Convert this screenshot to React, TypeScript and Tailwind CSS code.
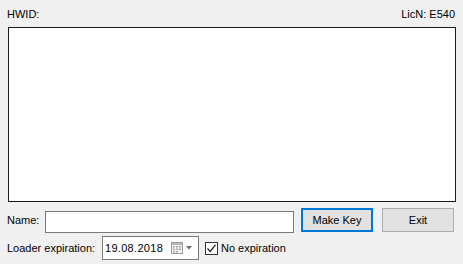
import React from "react";

export default function App() {
  return (
    <div
      className="w-[463px] h-[264px] bg-[#f0f0f0] text-[11px] text-black overflow-hidden"
      style={{ fontFamily: '"Liberation Sans", Arial, sans-serif' }}
    >
      <div className="flex justify-between pl-[7px] pr-[8px] pt-[8px] h-[27px] leading-[13px]">
        <span>HWID:</span>
        <span>LicN: E540</span>
      </div>
      <div className="ml-[8px] w-[448px] h-[175px] border border-[#1a1a1a] bg-white" />
      <div className="flex items-center h-[24px] mt-[6px] pl-[7px]">
        <span className="w-[38px]">Name:</span>
        <div className="w-[249px] h-[22px] border border-[#7a7a7a] bg-white mt-[3px]" />
        <button className="ml-[7px] w-[72px] h-[24px] border-2 border-[#0078d7] bg-[#e1e1e1] leading-none">
          Make Key
        </button>
        <button className="ml-[9px] w-[72px] h-[24px] border border-[#adadad] bg-[#e1e1e1] leading-none">
          Exit
        </button>
      </div>
      <div className="flex items-center h-[24px] mt-[4px] pl-[7px]">
        <span className="w-[95px]">Loader expiration:</span>
        <div className="w-[97px] h-[24px] border border-[#7a7a7a] bg-white flex items-center pl-[2px]">
          <span className="tracking-[0.3px]">19.08.2018</span>
          <svg width="24" height="14" viewBox="0 0 24 14" className="ml-auto mr-[3px]">
            <rect x="0.5" y="1.5" width="11" height="11" fill="#f4f4f4" stroke="#9a9a9a" />
            <rect x="1" y="2" width="10" height="2" fill="#b8b8b8" />
            <g fill="#a8a8a8">
              <rect x="2" y="5" width="2" height="1.5" />
              <rect x="5" y="5" width="2" height="1.5" />
              <rect x="8" y="5" width="2" height="1.5" />
              <rect x="2" y="7.5" width="2" height="1.5" />
              <rect x="5" y="7.5" width="2" height="1.5" />
              <rect x="8" y="7.5" width="2" height="1.5" />
              <rect x="2" y="10" width="2" height="1.5" />
              <rect x="5" y="10" width="2" height="1.5" />
            </g>
            <path d="M15 5 L21 5 L18 8.5 Z" fill="#6a6a6a" />
          </svg>
        </div>
        <div className="ml-[6px] w-[13px] h-[13px] border border-[#333] bg-white flex items-center justify-center">
          <svg width="11" height="11" viewBox="0 0 11 11">
            <path d="M1.5 5.5 L4.2 8.5 L9.5 1.8" fill="none" stroke="#222" strokeWidth="1.3" />
          </svg>
        </div>
        <span className="ml-[3px]">No expiration</span>
      </div>
    </div>
  );
}
